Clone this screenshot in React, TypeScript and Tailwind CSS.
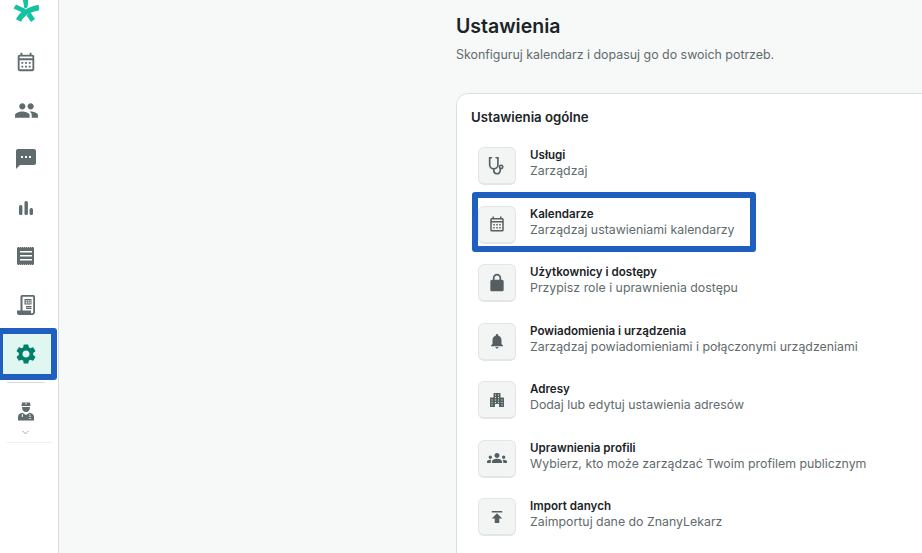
import React from 'react';
import { ChevronDown } from 'lucide-react';
import {
  MdOutlineCalendarMonth, MdPeople, MdSms, MdSettings,
  MdNotifications, MdGroups, MdPublish,
} from 'react-icons/md';

const Logo = () => (
  <svg viewBox="0 0 26 26" className="w-[26px] h-[26px]">
    <g fill="#12c2a0">
      <path d="M9.500 -1 L15.500 -1 L14.500 8.500 L11.500 9.500 Z" />
      <path d="M0.500 9.500 L3 5.500 L12.500 10 L9.500 13.500 Z" />
      <path d="M13.500 16.500 L17.500 13.500 L22 20 L18 23 Z" />
    </g>
    <path d="M5.500 21.500 C9 14 16 10.500 26 8.500" fill="none" stroke="#12c2a0" strokeWidth="5.500" />
  </svg>
);

const StatsIcon = () => (
  <svg viewBox="0 0 14 14" className="w-[14px] h-[14px]" fill="#5f6b6d">
    <rect x="0" y="4" width="3.400" height="10" rx="1.500" />
    <rect x="5.500" y="0" width="3.400" height="14" rx="1.500" />
    <rect x="10.600" y="7" width="3.400" height="7" rx="1.500" />
  </svg>
);

const ReceiptIcon = () => (
  <svg viewBox="0 0 18 18" className="w-[18px] h-[18px]" fill="#5f6b6d">
    <path d="M0 0.500h1v-.5h1v.5h1v-.5h1v.5h1v-.5h1v.5h1v-.5h1v.5h1v-.5h1v.5h1v-.5h1v.5h1v-.5h1v.5h1v-.5h1v.5h1V17.500h-1v.5h-1v-.5h-1v.5h-1v-.5h-1v.5h-1v-.5h-1v.5h-1v-.5H8v.5H7v-.5H6v.5H5v-.5H4v.5H3v-.5H2v.5H1v-.5H0z" />
    <path fill="#fff" d="M3 4h12v1.500H3zM3 8h12v1.500H3zM3 12h12v1.500H3z" />
  </svg>
);

const LedgerIcon = () => (
  <svg viewBox="0 0 18 20" className="w-[18px] h-[20px]">
    <path fill="#5f6b6d" d="M5 0h11.500A1.500 1.500 0 0 1 18 1.500V17a3 3 0 0 1-3 3H2a2 2 0 0 1-2-2v-2.500h3.500V1.500A1.500 1.500 0 0 1 5 0z" />
    <path fill="#fff" d="M5.500 1.800h10.700V17a1.200 1.200 0 0 1-1.200 1.200h-1.100a2 2 0 0 0 .1-.7v-2H5.500z" />
    <path fill="#5f6b6d" d="M7.500 4h7v5.500h-7zM9 11h5.500v1.500H9zM9 13h5.500v1H9z" />
    <path fill="#fff" d="M8.700 5.200h1.200v1.200H8.700zM10.600 5.200h1.200v1.200h-1.200zM12.500 5.200h1.200v1.200h-1.200zM8.700 7.200h1.200v1.200H8.700zM10.600 7.200h1.200v1.200h-1.200zM12.500 7.200h1.200v1.200h-1.200z" />
  </svg>
);

const DoctorIcon = () => (
  <svg viewBox="0 0 16 19" className="w-[16px] h-[19px]" fill="#5f6b6d">
    <path d="M4 0.500h8l.5 3.500h-9z" />
    <path d="M4 5h8c0 3-1.500 5-4 5s-4-2-4-5z" />
    <path d="M0 18.500v-3.500c0-2.500 2-3.800 4.500-4.200L8 13l3.500-2.200c2.500.4 4.500 1.700 4.500 4.200v3.500z" />
    <path fill="#fff" d="M7 1.500h2v.7h-2zM3.800 12h1v3h-1zM11.200 12h1v2.500h1v2.500h-1v-.8h1v-1.200h-2.500v1.200h1v.8h-1v-2.500h1.500z" />
  </svg>
);

const StethoscopeIcon = () => (
  <svg viewBox="0 0 24 24" className="w-[22px] h-[22px]" fill="none" stroke="#555f61" strokeWidth="1.800" strokeLinecap="round">
    <path d="M6 3H4v7.500a4.500 4.500 0 0 0 9 0V3h-2" />
    <path d="M8.500 15v2a3.500 3.500 0 0 0 7 0v-2" />
    <circle cx="16.500" cy="13" r="1.800" />
  </svg>
);

const LockIcon = () => (
  <svg viewBox="0 0 24 24" className="w-[20px] h-[20px]" fill="#555f61">
    <path d="M18 8h-1V6c0-2.760-2.240-5-5-5S7 3.240 7 6v2H6c-1.100 0-2 .9-2 2v10c0 1.100.9 2 2 2h12c1.100 0 2-.9 2-2V10c0-1.100-.9-2-2-2zM9 6c0-1.660 1.340-3 3-3s3 1.340 3 3v2H9V6z" />
  </svg>
);

const BuildingIcon = () => (
  <svg viewBox="0 0 14 14" className="w-[14px] h-[14px]" fill="#555f61">
    <path d="M3.500 0.500q0-.5.5-.5h6q.5 0 .5.500V4.500h3q.5 0 .5.500v9H9v-3H5v3H0V5q0-.5.5-.5h3z" />
    <path fill="#f3f5f5" d="M5 1.500h1v1H5zM8 1.500h1v1H8zM5 4h1v1H5zM8 4h1v1H8zM1.500 6.500h1v1h-1zM5 6.500h1v1H5zM8 6.500h1v1H8zM11.500 6.500h1v1h-1zM1.500 9h1v1h-1zM5 9h1v1H5zM8 9h1v1H8zM11.500 9h1v1h-1zM1.500 11.500h1v1h-1zM11.500 11.500h1v1h-1z" />
  </svg>
);

const navItems = [
  { key: 'calendar', icon: <MdOutlineCalendarMonth className="w-[22px] h-[22px] text-[#5f6b6d]" /> },
  { key: 'people', icon: <MdPeople className="w-[25px] h-[25px] text-[#5f6b6d]" /> },
  { key: 'chat', icon: <MdSms className="w-[24px] h-[24px] text-[#5f6b6d]" /> },
  { key: 'stats', icon: <StatsIcon /> },
  { key: 'receipt', icon: <ReceiptIcon /> },
  { key: 'ledger', icon: <LedgerIcon /> },
];

const boxIcon = 'w-[18px] h-[18px] text-[#555f61]';
const rows = [
  { title: 'Usługi', sub: 'Zarządzaj', icon: <StethoscopeIcon /> },
  { title: 'Kalendarze', sub: 'Zarządzaj ustawieniami kalendarzy', icon: <MdOutlineCalendarMonth className={boxIcon} /> },
  { title: 'Użytkownicy i dostępy', sub: 'Przypisz role i uprawnienia dostępu', icon: <LockIcon /> },
  { title: 'Powiadomienia i urządzenia', sub: 'Zarządzaj powiadomieniami i połączonymi urządzeniami', icon: <MdNotifications className={boxIcon} /> },
  { title: 'Adresy', sub: 'Dodaj lub edytuj ustawienia adresów', icon: <BuildingIcon /> },
  { title: 'Uprawnienia profili', sub: 'Wybierz, kto może zarządzać Twoim profilem publicznym', icon: <MdGroups className="w-[20px] h-[20px] text-[#555f61]" /> },
  { title: 'Import danych', sub: 'Zaimportuj dane do ZnanyLekarz', icon: <MdPublish className={boxIcon} /> },
];

export default function App() {
  return (
    <div className="w-[922px] h-[553px] overflow-hidden flex bg-[#f7f8f8] font-['Inter',sans-serif] relative">
      {/* Sidebar */}
      <aside className="w-[59px] shrink-0 h-full bg-white border-r border-[#d9dcdc] flex flex-col items-stretch">
        <div className="h-[39px] flex items-start justify-center pr-[6px] -mt-[1px]">
          <Logo />
        </div>
        <nav className="flex flex-col">
          {navItems.map((item) => (
            <div key={item.key} className="h-[48.5px] flex items-center justify-center pr-[6px]">
              {item.icon}
            </div>
          ))}
        </nav>
        <div className="h-[52px] mt-[-1px] w-[57px] bg-[#e0f7f1] flex items-center justify-center pr-[2px] border-[6px] border-l-[3px] border-[#1f5fbf] rounded-r-[3px]">
          <MdSettings className="w-[24px] h-[24px] text-[#00806a]" />
        </div>
        <div className="ml-[7px] mr-[13px] mt-[2px] border-t border-[#d9dcdc]" />
        <div className="flex flex-col items-center pr-[7px] pt-[19px]">
          <DoctorIcon />
          <ChevronDown className="w-[11px] h-[11px] mt-[6px] text-[#7b8587]" strokeWidth={1.500} />
        </div>
        <div className="mx-[6px] mt-[4px] border-t border-[#f0f1f1]" />
      </aside>

      {/* Main */}
      <main className="flex-1 pl-[397px] pt-[14px]">
        <h1 className="text-[19.500px] leading-[24px] font-semibold text-[#1b2427]">Ustawienia</h1>
        <p className="mt-[7px] text-[12.400px] leading-[20px] text-[#5f6b6d] whitespace-nowrap">
          Skonfiguruj kalendarz i dopasuj go do swoich potrzeb.
        </p>
        <section className="relative mt-[28px] w-[560px] h-[520px] bg-white border border-[#dcdfdf] rounded-[12px] pl-[21px] pt-[14px]">
          <h2 className="ml-[-7px] text-[13.200px] leading-[18px] font-semibold text-[#1b2427]">Ustawienia ogólne</h2>
          <div className="mt-[21px] flex flex-col gap-[20.500px]">
            {rows.map((row) => (
              <div key={row.title} className="flex items-center h-[38px] gap-[14px]">
                <div className="w-[38px] h-[38px] shrink-0 rounded-[6px] bg-[#f3f5f5] border border-[#e3e6e6] border-b-2 flex items-center justify-center">
                  {row.icon}
                </div>
                <div className="whitespace-nowrap mb-[6px]">
                  <div className="text-[11.600px] leading-[16px] font-semibold text-[#1b2427]">{row.title}</div>
                  <div className="text-[12.350px] leading-[16px] text-[#5f6b6d]">{row.sub}</div>
                </div>
              </div>
            ))}
          </div>
          {/* annotation frame */}
          <div className="absolute left-[15px] top-[98px] w-[284px] h-[60px] border-[6px] border-[#1f5fbf] rounded-[3px] pointer-events-none" />
        </section>
      </main>
    </div>
  );
}
